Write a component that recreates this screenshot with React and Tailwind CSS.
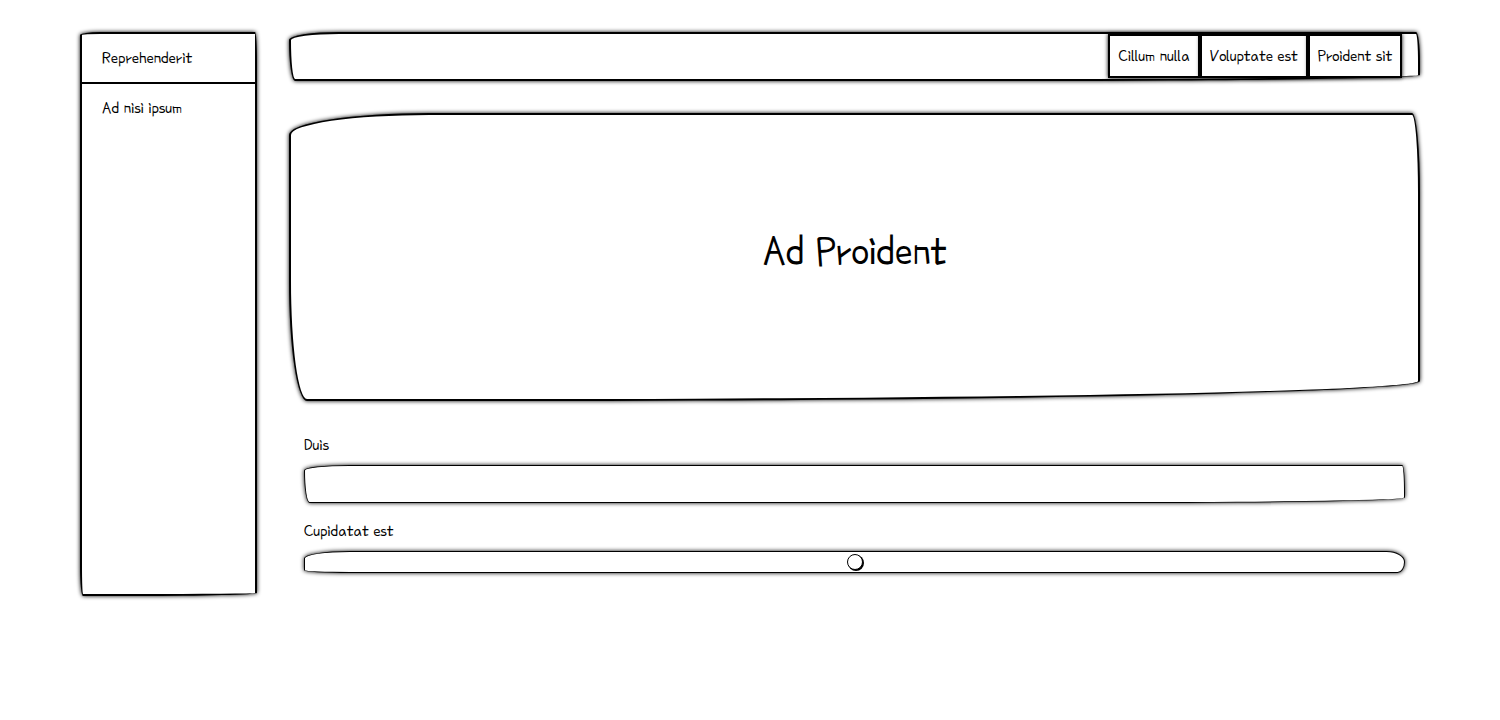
const sketch = 'border-black bg-white shadow-[0_0_4px_0px_#000]';

const actions = ['Cillum nulla', 'Voluptate est', 'Proident sit'];

export default function App() {
  return (
    <div className="flex gap-8 bg-white px-20 py-8 font-['Poor_Story','Patrick_Hand','Liberation_Sans',sans-serif] text-[18px] leading-6 text-black">
      <aside
        className={`flex h-141 w-[177px] shrink-0 flex-col rounded-[20px_2px_120px_3px/3px_30px_3px_30px] border-2 ${sketch}`}
      >
        <a href="#reprehenderit" className="border-b-2 border-black px-5 py-3">
          Reprehenderit
        </a>
        <a href="#ad-nisi" className="px-5 py-3">
          Ad nisi ipsum
        </a>
      </aside>
      <main className="min-w-0 flex-1">
        <nav
          className={`flex h-[49px] justify-end rounded-[50px_4px_400px_6px/8px_30px_6px_40px] border-2 pr-4 ${sketch}`}
        >
          {actions.map((label) => (
            <button key={label} type="button" className={`h-11 border-2 px-2 ${sketch}`}>
              {label}
            </button>
          ))}
        </nav>
        <section
          className={`mt-8 flex h-72 items-center justify-center rounded-[140px_8px_900px_18px/22px_80px_20px_120px] border-2 pb-3 ${sketch}`}
        >
          <h1 className="text-[44px] leading-12">Ad Proident</h1>
        </section>
        <form className="flex flex-col px-[15px] pt-8">
          <label htmlFor="duis">Duis</label>
          <input
            id="duis"
            type="text"
            className={`mt-2 h-[38px] w-full rounded-[50px_3px_300px_6px/6px_30px_6px_36px] border px-3 outline-none ${sketch}`}
          />
          <label htmlFor="cupidatat" className="mt-4">
            Cupidatat est
          </label>
          <input
            id="cupidatat"
            type="range"
            className={`mt-2 h-[22px] w-full appearance-none rounded-[50px_20px_8px_50px/8px_12px_12px_3px] border [&::-webkit-slider-thumb]:size-4 [&::-webkit-slider-thumb]:appearance-none [&::-webkit-slider-thumb]:rounded-full [&::-webkit-slider-thumb]:border [&::-webkit-slider-thumb]:border-black [&::-webkit-slider-thumb]:bg-white [&::-webkit-slider-thumb]:shadow-[1px_1px_0_#000] ${sketch}`}
          />
        </form>
      </main>
    </div>
  );
}
